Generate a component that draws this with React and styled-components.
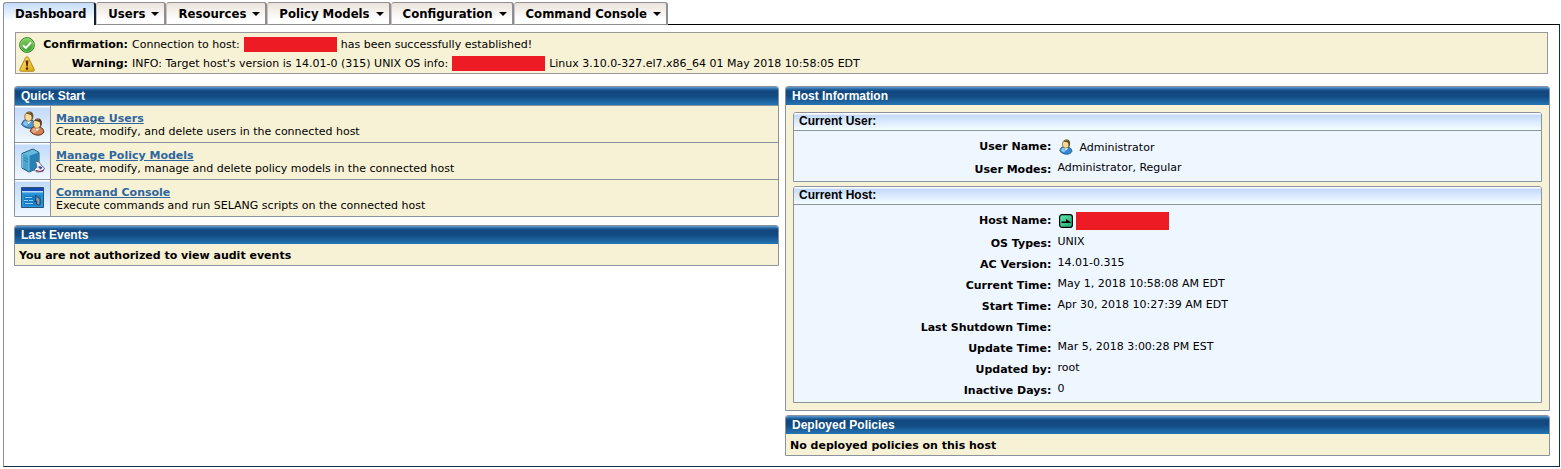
import React from 'react';
import styled, { createGlobalStyle } from 'styled-components'

const GlobalStyle = createGlobalStyle`
  * {
    box-sizing: border-box;
  }
  body {
    background: #fff;
    color: #000;
    font-family: Verdana, "DejaVu Sans", sans-serif;
    font-size: 11px;
    line-height: 13px;
    margin: 0;
  }
`
const Page = styled.div`
  padding: 2px 1px 0 3px;
`
const Tabs = styled.nav`
  display: flex;
  height: 22px;
`
const Tab = styled.button`
  align-items: center;
  background: ${({ $active }) => $active
    ? 'linear-gradient(#c3dbfa, #fff 80%)'
    : 'linear-gradient(#ebe3db, #fff 80%)'};
  border: 1px solid #8f8f93;
  border-bottom-width: ${({ $active }) => $active ? 0 : '1px'};
  border-left-color: ${({ $active }) => $active ? '#8f8f93' : '#c9c5c3'};
  border-radius: 3px 3px 0 0;
  border-right: 2px solid ${({ $active }) => $active ? '#14202e' : '#8f8f93'};
  color: #000;
  cursor: pointer;
  display: flex;
  font-family: Tahoma, "DejaVu Sans Condensed", "DejaVu Sans", sans-serif;
  font-size: 13px;
  font-weight: bold;
  gap: 6px;
  height: 23px;
  line-height: 16px;
  padding: 0 ${({ $active }) => $active ? '8px' : '5px'} 0 11px;
`
const Caret = styled.span`
  border: 4px solid transparent;
  border-bottom: 0;
  border-top-color: #000;
`
const Frame = styled.main`
  border: 1px solid #12304e;
  border-left-color: #8f8f93;
  border-top-color: #000;
  padding: 7px 9px 10px 10px;
`
const Messages = styled.div`
  background: #f7f2d5;
  border: 1px solid #999;
  margin: 0 2px 12px 1px;
  padding: 2px 3px 0;
`
const Message = styled.div`
  align-items: center;
  display: grid;
  grid-template-columns: 16px 93px 1fr;
  height: 19px;
`
const MessageLabel = styled.strong`
  text-align: right;
`
const MessageText = styled.div`
  align-items: center;
  display: flex;
  gap: 4px;
  padding-left: 4px;
  white-space: nowrap;
`
const Redacted = styled.span`
  background: #ed1c24;
  display: inline-block;
  height: ${({ $tall }) => $tall ? '18px' : '15px'};
  width: 93px;
`
const Columns = styled.div`
  align-items: start;
  display: grid;
  gap: 6px;
  grid-template-columns: 1fr 1fr;
`
const Column = styled.div`
  display: flex;
  flex-direction: column;
  gap: ${({ $gap }) => $gap};
`
const Panel = styled.section`
  background: #f7f2d5;
  border: 1px solid #8b949e;
  border-radius: 3px 3px 0 0;
`
const PanelTitle = styled.h2`
  background: linear-gradient(#5f9dd3 0, #2a6aa6 2px, #11487f 4px, #114a81 9px, #2675b5 100%);
  border-radius: 2px 2px 0 0;
  color: #fff;
  font: bold 12px/18px Arial, "Liberation Sans", sans-serif;
  height: 18px;
  margin: 0;
  padding-left: 6px;
`
const PanelText = styled.p`
  font-weight: bold;
  line-height: 19px;
  margin: 0;
  padding: 2px 0 0 4px;
`
const Task = styled.div`
  border-top: 1px solid #8b949e;
  display: grid;
  grid-template-columns: 36px 1fr;
  height: 37px;
`
const TaskIcon = styled.div`
  background: linear-gradient(#fff 1px, #c3dafa 2px, #f0f8ff);
  border-right: 1px solid #8b949e;
  display: grid;
  place-items: center;
`
const TaskText = styled.div`
  padding: 6px 5px 0;
`
const TaskLink = styled.a`
  color: #2f66a0;
  display: table;
  font-weight: bold;
`
const HostBody = styled.div`
  display: grid;
  gap: 4px;
  padding: 7px;
`
const Box = styled.section`
  background: #eef6ff;
  border: 1px solid #8b949e;
  border-radius: 3px 3px 0 0;
`
const BoxTitle = styled.h3`
  background: linear-gradient(#fff 1px, #c3dafa 2px, #dcebff 9px, #f2feff);
  border-bottom: 1px solid #8b949e;
  border-radius: 2px 2px 0 0;
  font: bold 12px/17px Arial, "Liberation Sans", sans-serif;
  height: 18px;
  margin: 0;
  padding-left: 5px;
`
const Info = styled.table`
  border-collapse: collapse;
  margin-top: 1px;
  table-layout: fixed;
  width: 100%;
`
const InfoRow = styled.tr`
  height: ${({ $first }) => $first ? '28px' : '21px'};
`
const Label = styled.th`
  padding: 0 4px ${({ $first }) => $first ? 0 : '2px'} 0;
  text-align: right;
  width: 35%;
`
const Value = styled.td`
  padding: 0 0 ${({ $first }) => $first ? 0 : '6px'} 2px;
`
const NameValue = styled.div`
  align-items: center;
  display: flex;
  gap: ${({ $gap }) => $gap};
  padding: 2px 0 0 2px;
`

const OkIcon = () => (
  <svg width="16" height="16" viewBox="0 0 16 16">
    <defs>
      <linearGradient id="ok" x1="0" y1="0" x2="0" y2="1">
        <stop offset="0" stopColor="#8bd162" />
        <stop offset="1" stopColor="#2f9a2a" />
      </linearGradient>
    </defs>
    <circle cx="8" cy="8" r="7.4" fill="url(#ok)" stroke="#33852f" />
    <circle cx="8" cy="8" r="6.4" fill="none" stroke="#9bd884" strokeWidth=".7" />
    <path d="M4 8.3l2.8 2.8L12 5.4" fill="none" stroke="#fff" strokeWidth="2.1" />
  </svg>
)

const WarningIcon = () => (
  <svg width="16" height="16" viewBox="0 0 16 16">
    <defs>
      <linearGradient id="warn" x1="0" y1="0" x2="1" y2="1">
        <stop offset="0" stopColor="#ffee78" />
        <stop offset="1" stopColor="#dba80c" />
      </linearGradient>
    </defs>
    <path d="M8 .8c.7 0 1.1.5 1.5 1.2l5.6 11.2c.5 1.2 0 2-1 2H1.9c-1 0-1.5-.8-1-2L6.5 2C6.9 1.3 7.3.8 8 .8z" fill="url(#warn)" stroke="#b48212" />
    <path d="M6.6 4.5h2.8L8.7 10.5H7.3z" fill="#64210e" />
    <circle cx="8" cy="12.6" r="1.3" fill="#64210e" />
  </svg>
)

// head and shoulders, seen slightly from the side
const Person = ({ coat, light, shade, hair }) => (
  <g>
    <path d="M.8 13.5c.2-2.500 1.700-4.300 4.200-5l6 .8c2 .8 3.200 2.400 3.400 4.700-.8 1.700-2.900 3.200-5.900 3.200-3 0-6.200-1.700-7.700-3.700z" fill={coat} stroke={shade} />
    <path d="M2 13c.4-1.700 1.500-2.900 3.200-3.300L7 13.500 5.500 15C4 14.500 2.800 13.900 2 13z" fill={light} />
    <path d="M5.5 9.200l2 4 2.500-3z" fill="#fff" />
    <ellipse cx="7.500" cy="5.800" rx="3.800" ry="4.500" fill="#f9da98" stroke="#7a6030" strokeWidth=".8" />
    <path d="M5 2.500C5.800 1 7 .5 8.500.5c2.800 0 4.200 2 3.900 5-.1 1.700-.7 3-1.700 3.900.3-2 .2-3.900-.8-5.400C8.700 3.500 6.500 3.200 5 2.500z" fill={hair} />
    <path d="M6.500 1.900c1-.6 2-.6 3-.3" fill="none" stroke="#a58b55" strokeWidth=".8" />
  </g>
)

const UserIcon = () => (
  <svg width="14" height="16" viewBox="0 0 15.5 18">
    <Person coat="#3587cf" light="#8cc6f2" shade="#1f5a92" hair="#5c4a20" />
  </svg>
)

const UsersIcon = () => (
  <svg width="24" height="26" viewBox="0 0 24 26">
    <Person coat="#4f98d4" light="#8cc3ec" shade="#1e4c7b" hair="#6a552a" />
    <g transform="translate(8.5 7)">
      <Person coat="#cf8054" light="#e8a981" shade="#623016" hair="#5a3c1c" />
    </g>
  </svg>
)

const PolicyIcon = () => (
  <svg width="24" height="26" viewBox="0 0 24 26">
    <path d="M1 5.500L12 1l6 3.500v15L8 24l-7-4z" fill="#4aa5cf" stroke="#174b6b" />
    <path d="M1.500 5.700L12 1.500l5.500 3L8 8z" fill="#66b9df" />
    <path d="M8 8l9.500-3.500v15L8 23.500z" fill="#2582b2" />
    <path d="M8 8v15.500M1.500 6v14" stroke="#8bd0ea" strokeWidth=".8" />
    <path d="M2.500 9.500l4.500 2M2.500 12l4.500 2" stroke="#2b7ba5" strokeWidth=".8" />
    <path d="M14.500 13l3.500 1 3 4 2.500 2-1.500 3.500-6 .5-3-2 3-3z" fill="#eeeef8" stroke="#555971" strokeWidth=".8" />
    <path d="M17 19l2-1 2.500 1.500-2 2z" fill="#3c4fa5" />
    <path d="M15 22.500l4 1 3.500-1.500" fill="none" stroke="#8a2840" />
  </svg>
)

const ConsoleIcon = () => (
  <svg width="24" height="22" viewBox="0 0 24 22">
    <path d="M.5.5h22v20H.5z" fill="#2a93d8" stroke="#285374" />
    <path d="M1 1h21v3H1z" fill="#1647b5" />
    <path d="M1 4h21v1.500H1z" fill="#b4ddf5" />
    <path d="M3 8.500h17v10H3z" fill="#167bc2" />
    <path d="M4 10.500h7M3 13.500h4M8 13.500h4M4 16.500h8" stroke="#8fd0f8" />
    <path d="M14.500 8l4.500 4.500V17l-1.500 1-2-1 .5-3-2 .5 1-3z" fill="#8ba0ae" stroke="#102f48" strokeWidth=".8" />
  </svg>
)

const HostIcon = () => (
  <svg width="14" height="14" viewBox="0 0 14 14">
    <defs>
      <linearGradient id="host" x1="0" y1="0" x2="1" y2="1">
        <stop offset="0" stopColor="#62e8ae" />
        <stop offset="1" stopColor="#22a570" />
      </linearGradient>
    </defs>
    <rect x=".6" y=".6" width="12.8" height="12.8" rx="2.5" fill="url(#host)" stroke="#000" strokeWidth="1.2" />
    <path d="M2.500 7.500H7V5l4.500 3v1h-9z" fill="#000" />
  </svg>
)

const menus = ['Users', 'Resources', 'Policy Models', 'Configuration', 'Command Console']

const tasks = [
  { title: 'Manage Users', text: 'Create, modify, and delete users in the connected host', Icon: UsersIcon },
  { title: 'Manage Policy Models', text: 'Create, modify, manage and delete policy models in the connected host', Icon: PolicyIcon },
  { title: 'Command Console', text: 'Execute commands and run SELANG scripts on the connected host', Icon: ConsoleIcon },
]

const userInfo = [
  ['User Name:', <NameValue $gap="6px"><UserIcon />Administrator</NameValue>],
  ['User Modes:', 'Administrator, Regular'],
]

const hostInfo = [
  ['Host Name:', <NameValue $gap="3px"><HostIcon /><Redacted $tall /></NameValue>],
  ['OS Types:', 'UNIX'],
  ['AC Version:', '14.01-0.315'],
  ['Current Time:', 'May 1, 2018 10:58:08 AM EDT'],
  ['Start Time:', 'Apr 30, 2018 10:27:39 AM EDT'],
  ['Last Shutdown Time:', ''],
  ['Update Time:', 'Mar 5, 2018 3:00:28 PM EST'],
  ['Updated by:', 'root'],
  ['Inactive Days:', '0'],
]

const InfoBox = ({ title, rows }) => (
  <Box>
    <BoxTitle>{title}</BoxTitle>
    <Info>
      <tbody>
        {rows.map(([label, value], i) => (
          <InfoRow key={label} $first={i === 0}>
            <Label scope="row" $first={i === 0}>{label}</Label>
            <Value $first={i === 0}>{value}</Value>
          </InfoRow>
        ))}
      </tbody>
    </Info>
  </Box>
)

export default function App() {
  return (
    <Page>
      <GlobalStyle />
      <Tabs>
        <Tab $active>Dashboard</Tab>
        {menus.map(name => (
          <Tab key={name} aria-haspopup="menu">{name}<Caret /></Tab>
        ))}
      </Tabs>
      <Frame>
        <Messages>
          <Message>
            <OkIcon />
            <MessageLabel>Confirmation:</MessageLabel>
            <MessageText>
              <span>Connection to host:</span>
              <Redacted />
              <span>has been successfully established!</span>
            </MessageText>
          </Message>
          <Message>
            <WarningIcon />
            <MessageLabel>Warning:</MessageLabel>
            <MessageText>
              <span>INFO: Target host's version is 14.01-0 (315) UNIX OS info:</span>
              <Redacted />
              <span>Linux 3.10.0-327.el7.x86_64 01 May 2018 10:58:05 EDT</span>
            </MessageText>
          </Message>
        </Messages>
        <Columns>
          <Column $gap="8px">
            <Panel>
              <PanelTitle>Quick Start</PanelTitle>
              {tasks.map(({ title, text, Icon }) => (
                <Task key={title}>
                  <TaskIcon><Icon /></TaskIcon>
                  <TaskText>
                    <TaskLink href="#">{title}</TaskLink>
                    {text}
                  </TaskText>
                </Task>
              ))}
            </Panel>
            <Panel>
              <PanelTitle>Last Events</PanelTitle>
              <PanelText>You are not authorized to view audit events</PanelText>
            </Panel>
          </Column>
          <Column $gap="4px">
            <Panel>
              <PanelTitle>Host Information</PanelTitle>
              <HostBody>
                <InfoBox title="Current User:" rows={userInfo} />
                <InfoBox title="Current Host:" rows={hostInfo} />
              </HostBody>
            </Panel>
            <Panel>
              <PanelTitle>Deployed Policies</PanelTitle>
              <PanelText>No deployed policies on this host</PanelText>
            </Panel>
          </Column>
        </Columns>
      </Frame>
    </Page>
  );
}
